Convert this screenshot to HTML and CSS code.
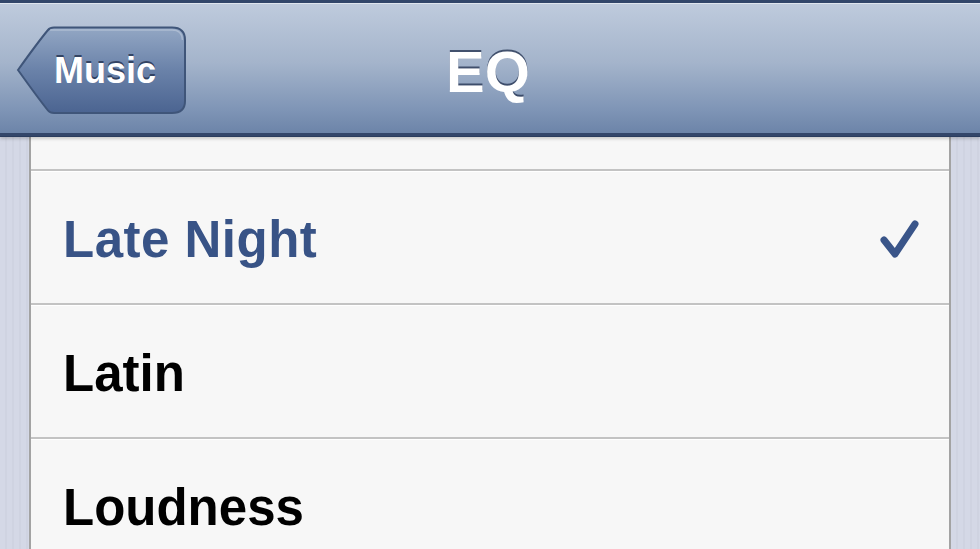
FILE: index.html
```html
<!DOCTYPE html>
<html lang="en">
<head>
    <meta charset="UTF-8">
    <meta name="viewport" content="width=device-width, initial-scale=1.0">
    <title>EQ</title>
    <link rel="stylesheet" href="styles.css">
</head>
<body>

    <!-- Navigation bar -->
    <div class="nav-bar">
        <div class="back-button">
            <svg class="back-shape" width="172" height="90" viewBox="0 0 172 90">
                <defs>
                    <linearGradient id="backFill" x1="0" y1="0" x2="0" y2="1">
                        <stop offset="0" stop-color="#93a7c4"/>
                        <stop offset="0.5" stop-color="#6a82a9"/>
                        <stop offset="1" stop-color="#4b6491"/>
                    </linearGradient>
                </defs>
                <path d="M2 44 C12 30 22 16 32 4 Q34 1.5 38 1.5 L156 1.5 Q169 1.5 169 14 L169 75 Q169 87 156 87 L38 87 Q34 87 32 84.5 C22 72 12 58 2 44 Z"
                      fill="url(#backFill)" stroke="#3f5579" stroke-width="2"/>
                <path d="M34 4 L156 4 Q166 4 166.5 14" fill="none" stroke="rgba(255,255,255,0.25)" stroke-width="1.5"/>
            </svg>
            <span class="back-label">Music</span>
        </div>
        <div class="nav-title">EQ</div>
        <div class="nav-spacer"></div>
    </div>

    <!-- Grouped list -->
    <div class="grouped">
        <div class="side-stripe"></div>
        <div class="list">
            <div class="row row-partial"></div>
            <div class="row selected">
                <span class="row-label">Late Night</span>
                <svg class="check" width="42" height="44" viewBox="0 0 42 44">
                    <path d="M5 24 L16 38 L36 8" fill="none" stroke="#3a5589" stroke-width="7" stroke-linecap="round" stroke-linejoin="round"/>
                </svg>
            </div>
            <div class="row"><span class="row-label">Latin</span></div>
            <div class="row"><span class="row-label">Loudness</span></div>
        </div>
        <div class="side-stripe"></div>
    </div>

</body>
</html>
```

FILE: styles.css
```css
/* Page */
body {
    margin: 0;
    width: 980px;
    height: 549px;
    overflow: hidden;
    font-family: "Liberation Sans", Arial, sans-serif;
    background: #d3d7e4;
}

/* Navigation bar */
.nav-bar {
    position: relative;
    z-index: 2;
    height: 133px;
    display: flex;
    align-items: center;
    padding: 0 0 0 16px;
    border-top: 3px solid #32466a;
    box-shadow: inset 0 1px 0 #dfe5ee, inset 0 -3px 0 #33466a, 0 2px 3px rgba(0, 0, 0, 0.18);
    background: linear-gradient(to bottom, #bfcbdd 0%, #a4b4cb 45%, #7f95b6 80%, #6a82a7 100%);
    border-bottom: 1px solid #2a3c5e;
}

.back-button {
    position: relative;
    width: 172px;
    height: 90px;
    margin-top: 2px;
    display: flex;
    align-items: center;
}

.back-shape {
    position: absolute;
    top: 0;
    left: 0;
}

.back-label {
    position: relative;
    padding-left: 38px;
    font-size: 36px;
    font-weight: bold;
    color: #ffffff;
    text-shadow: 0 -2px 0 rgba(30, 45, 75, 0.75);
}

.nav-title {
    flex: 1;
    text-align: center;
    margin-top: 4px;
    padding-right: 4px;
    font-size: 58px;
    font-weight: bold;
    color: #ffffff;
    text-shadow: 0 -2px 0 rgba(40, 55, 85, 0.8);
}

.nav-spacer {
    width: 188px;
}

/* Grouped list */
.grouped {
    display: flex;
    height: 412px;
}

.side-stripe {
    width: 29px;
    background: repeating-linear-gradient(90deg, #d4d8e6 0 5px, #cfd3e1 5px 7px);
}

.list {
    flex: 1;
    background: #f7f7f7;
    border-left: 2px solid #a3a3a3;
    border-right: 2px solid #a3a3a3;
}

.row {
    height: 132px;
    display: flex;
    align-items: center;
    justify-content: space-between;
    padding: 0 28px 0 32px;
    border-bottom: 2px solid #c3c3c3;
    box-shadow: 0 1px 0 #ffffff;
}

.row-partial {
    height: 32px;
}

.row-label {
    font-size: 51px;
    font-weight: bold;
    color: #000000;
    margin-top: 4px;
}

.selected .row-label {
    color: #385386;
    letter-spacing: 0.5px;
}

.check {
    margin-top: 2px;
}
```
